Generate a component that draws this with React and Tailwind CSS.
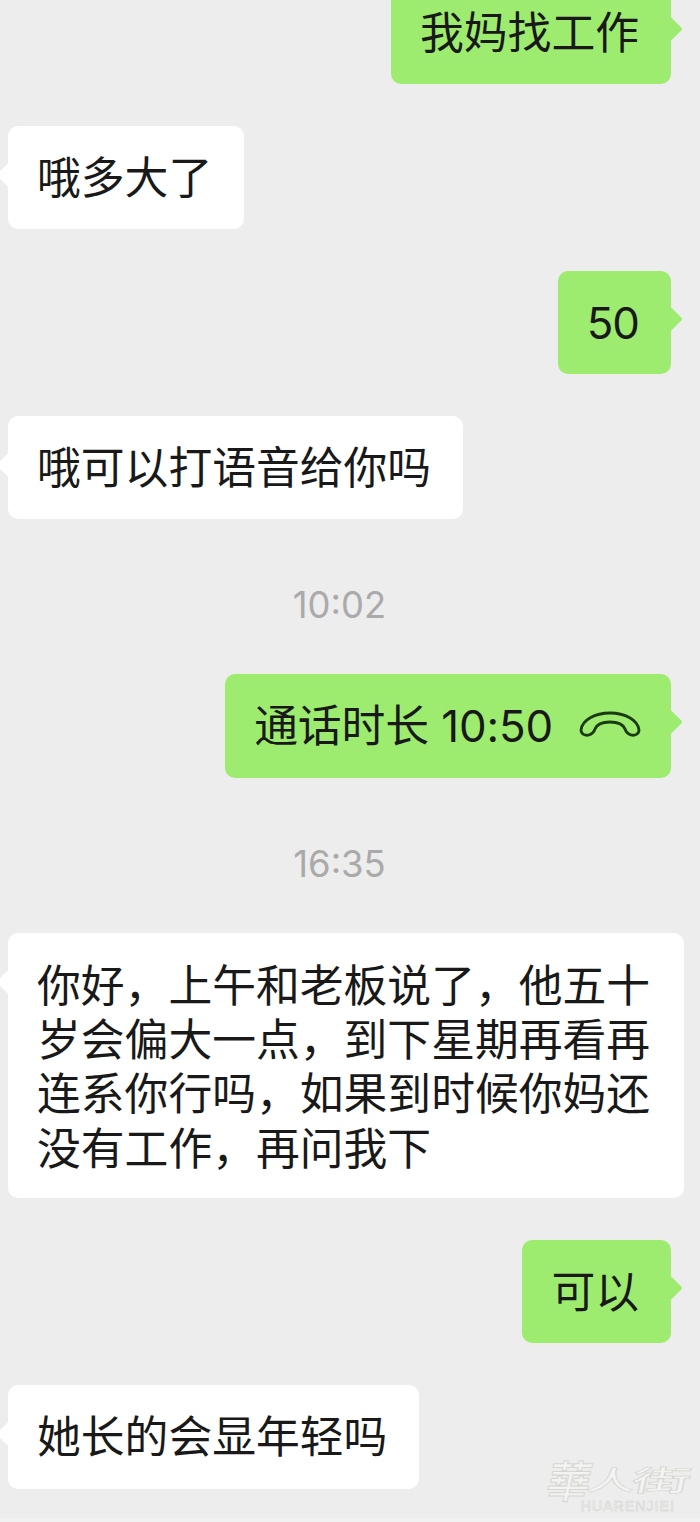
import React from 'react';

const Bubble = ({ mine, children, className = 'pb-[22.8px] pt-[26px]' }) => (
  <div className={`relative rounded-[10px] pl-[29px] pr-[32px] text-[43.8px] leading-[54.4px] ${mine ? 'self-end mr-[29px] bg-[#9dec6f]' : 'self-start ml-[8px] bg-white'} ${className}`}>
    {mine ? (
      <span className="absolute right-[-8px] top-[39px] h-[18px] w-[18px] rotate-45 rounded-[2px] bg-[#9dec6f]" />
    ) : (
      <span className="absolute left-[-8px] top-[40px] h-[18px] w-[18px] rotate-45 rounded-[2px] bg-white" />
    )}
    <div className="relative flex items-center">{children}</div>
  </div>
);

const Time = ({ children }) => (
  <div className="mb-[44px] mr-[21px] mt-[61px] text-center text-[36.4px] leading-[50px] text-[#aaaaaa]">{children}</div>
);

const HangupIcon = () => (
  <svg width="62" height="27" viewBox="0 0 62 27" fill="none" stroke="#1b3a10" strokeWidth="2.8" strokeLinejoin="round" className="-mr-[2px] ml-[26px] mt-[-6px] shrink-0">
    <path d="M2 19 C3 9 16 2 31 2 C46 2 59 9 60 19 C60 23 56 25 52 24 C49 23 47 21 46 18 C44 13 38 11 31 11 C24 11 18 13 16 18 C15 21 13 23 10 24 C6 25 2 23 2 19 Z" />
  </svg>
);

export default function App() {
  return (
    <div className="relative flex h-[1522px] w-[700px] flex-col overflow-hidden bg-[#ededed] font-['Inter','Noto_Sans_CJK_SC',sans-serif] text-[#191919]">
      <div className="-mt-[19.4px] flex flex-col gap-[42px]">
        <Bubble mine>我妈找工作</Bubble>
        <Bubble>哦多大了</Bubble>
        <Bubble mine><span className="tracking-[-1px]">50</span></Bubble>
        <Bubble>哦可以打语音给你吗</Bubble>
      </div>
      <Time>10:02</Time>
      <Bubble mine>
        <span className="whitespace-pre tracking-[-0.1px]">通话时长 10:50</span>
        <HangupIcon />
      </Bubble>
      <Time>16:35</Time>
      <div className="flex flex-col gap-[42px]">
        <Bubble className="w-[676px] pb-[21px] pt-[27px]">你好，上午和老板说了，他五十岁会偏大一点，到下星期再看再连系你行吗，如果到时候你妈还没有工作，再问我下</Bubble>
        <Bubble mine>可以</Bubble>
        <Bubble>她长的会显年轻吗</Bubble>
      </div>
      <div className="mt-auto h-[4px] bg-[#f1f1f1]" />
      {/* watermark */}
      <div className="absolute bottom-[10px] right-[8px] flex flex-col items-end">
        <div className="flex -skew-x-12 items-center whitespace-nowrap font-['Noto_Sans_CJK_TC',sans-serif] text-[44px] font-medium leading-[46px] text-[#f3f3f1] [-webkit-text-stroke:1px_#d6d6d2]">
          <span className="w-[42px] text-center">華</span>
          <span className="w-[42px] scale-x-110 scale-y-[0.6] text-center">人</span>
          <span className="w-[60px] scale-x-[1.35] scale-y-[0.65] text-center">街</span>
        </div>
        <div className="mr-[17px] mt-[-1px] font-['Liberation_Sans',sans-serif] text-[14px] leading-[11px] tracking-[1.1px] text-[#f3f3f1] [-webkit-text-stroke:0.5px_#cfcfcb]">HUARENJIEI</div>
      </div>
    </div>
  );
}
